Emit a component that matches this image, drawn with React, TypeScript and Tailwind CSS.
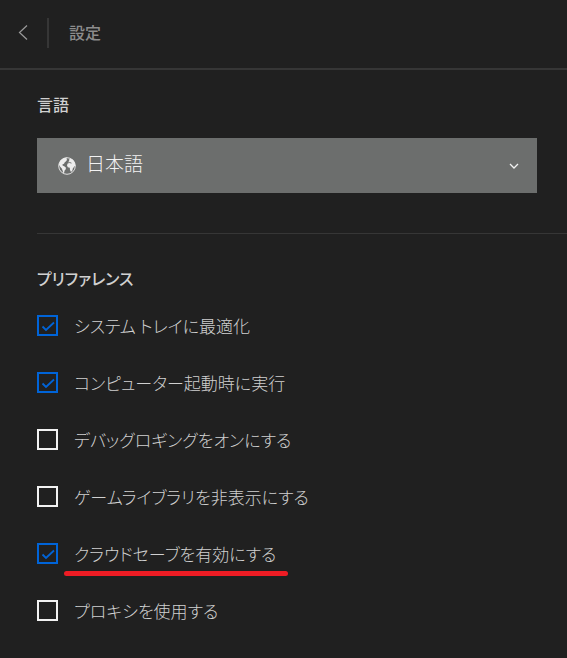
import { useState } from "react"

const preferences = [
  { id: "tray", label: "システム トレイに最適化", checked: true },
  { id: "startup", label: "コンピューター起動時に実行", checked: true },
  { id: "debug", label: "デバッグロギングをオンにする", checked: false },
  { id: "library", label: "ゲームライブラリを非表示にする", checked: false },
  { id: "cloud", label: "クラウドセーブを有効にする", checked: true, marked: true },
  { id: "proxy", label: "プロキシを使用する", checked: false },
]

function GlobeIcon() {
  return (
    <svg
      viewBox="0 0 18 18"
      className="pointer-events-none col-start-1 row-start-1 ml-[21px] size-[18px] text-[#ededed]"
      aria-hidden="true"
    >
      <circle cx="9" cy="9" r="8.3" fill="none" stroke="currentColor" strokeWidth="0.9" />
      <path
        fill="currentColor"
        d="M.8 7.6 2.4 3.6 5.4 1.2 9 .6 8.4 2 9.2 2.8 7.8 4.4 6.8 5.2 6 6.8 4.4 7.4 4.6 8.6 6.6 9.4 8 10.8 7.6 12.4 6.6 13.6 6.2 15.4 5.4 16.4 4.6 13.6 3.8 11.4 2.2 9.8Z"
      />
      <path
        fill="currentColor"
        d="M9.8 5.2 11.4 4 10.8 2.8 12.6 1.4 15 2.8 16.8 5.4 17.4 9 16.4 9.2 15.6 10.6 14.8 11.6 14.4 13.6 13 15 12 13 11.8 10.8 9.8 10.2 9 8.4 9.6 6.6 11.4 6 13.4 6.6 13.8 6 12.4 5.2Z"
      />
    </svg>
  )
}

function Preference({ id, label, checked, marked }: { id: string; label: string; checked: boolean; marked?: boolean }) {
  const [on, setOn] = useState(checked)

  return (
    <li className="flex h-[57px] items-center">
      <span className="grid shrink-0 place-items-center">
        <input
          id={id}
          type="checkbox"
          checked={on}
          onChange={(e) => setOn(e.target.checked)}
          className="col-start-1 row-start-1 size-[21px] appearance-none border-2 border-[#f2f2f2] checked:border-[#0064d8]"
        />
        {on && (
          <svg viewBox="0 0 20 20" className="pointer-events-none col-start-1 row-start-1 size-5" aria-hidden="true">
            <path d="M4.5 10.5 8 14 16 6.5" fill="none" stroke="#0064d8" strokeWidth="1.8" />
          </svg>
        )}
      </span>
      <label htmlFor={id} className="relative ml-4 text-[17px] leading-6 font-light text-[#d0d0d0]">
        {label}
        {marked && <span className="absolute top-[29px] -right-3 -left-2.5 h-[5px] rounded-full bg-[#ee1c24]" />}
      </label>
    </li>
  )
}

export default function App() {
  return (
    <div className="min-h-screen bg-[#202020] font-['Noto_Sans_CJK_JP',sans-serif] text-[#d0d0d0] [font-feature-settings:'palt']">
      <header className="flex h-[70px] items-center border-b-2 border-[#363636] pb-1">
        <button type="button" aria-label="戻る" className="ml-[18px] text-[#9a9a9a]">
          <svg viewBox="0 0 10 16" className="h-4 w-[10px]" fill="none" stroke="currentColor" strokeWidth="1.2" aria-hidden="true">
            <path d="M9 1.5 1.5 8.5 9 15.5" />
          </svg>
        </button>
        <div className="mt-0.5 ml-[19px] h-[30px] w-0.5 bg-[#363636]" />
        <h1 className="ml-5 text-base leading-6 font-medium text-[#8c8c8c]">設定</h1>
      </header>

      <main>
        <section className="ml-[37px] border-b border-[#363636] pt-[22px] pb-10">
          <label htmlFor="language" className="block text-base leading-6 font-medium">
            言語
          </label>
          <div className="mt-[22px] mr-[30px] grid items-center">
            <select
              id="language"
              className="col-start-1 row-start-1 h-[55px] w-full appearance-none bg-[#6c6e6d] pr-10 pb-1 pl-[49px] text-[19px] font-light text-[#f2f2f2]"
            >
              <option>日本語</option>
            </select>
            <GlobeIcon />
            <svg
              viewBox="0 0 10 6"
              className="pointer-events-none col-start-1 row-start-1 mr-[18px] h-[6px] w-[10px] justify-self-end"
              fill="none"
              stroke="#f2f2f2"
              strokeWidth="1.3"
              aria-hidden="true"
            >
              <path d="M1 1 5 5 9 1" />
            </svg>
          </div>
        </section>

        <section className="ml-[37px] pt-8">
          <h2 className="text-base leading-6 font-medium">プリファレンス</h2>
          <ul className="mt-[7px]">
            {preferences.map((p) => (
              <Preference key={p.id} {...p} />
            ))}
          </ul>
        </section>
      </main>
    </div>
  )
}
